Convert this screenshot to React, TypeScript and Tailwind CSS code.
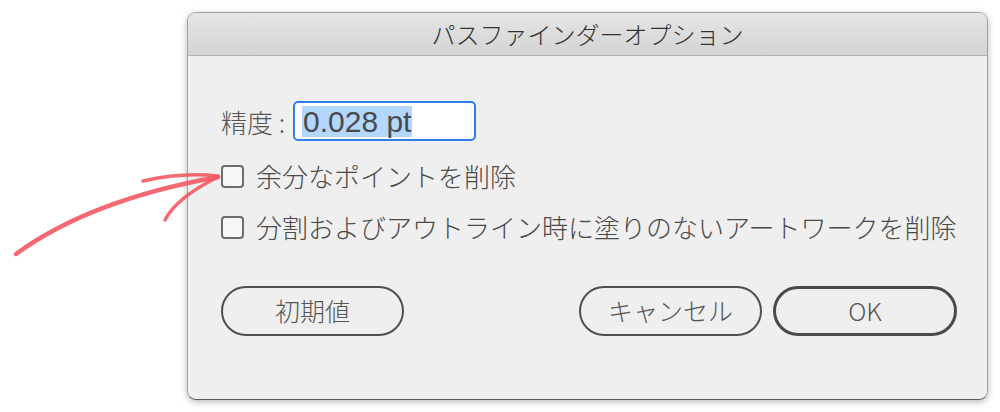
import React from 'react';

const jp = "font-['Noto_Sans_CJK_JP','Noto_Sans',sans-serif]";

function Checkbox({ label }: { label: string }) {
  return (
    <div className="flex h-[40px] items-center">
      <span className="h-[23px] w-[23px] rounded-[4px] border-2 border-[#6b6b6b] bg-[#f6f6f6]" />
      <span className="ml-[12px] text-[26px] font-light leading-[32px] text-[#4a4a4a]">{label}</span>
    </div>
  );
}

function PillButton({ label, primary }: { label: string; primary?: boolean }) {
  return (
    <button
      type="button"
      className={
        primary
          ? 'flex h-[50px] w-[184px] items-center justify-center rounded-full border-[3px] border-[#4a4a4a] text-[25px] font-light text-[#555]'
          : 'flex h-[50px] w-[183px] items-center justify-center rounded-full border-2 border-[#4f4f4f] text-[25px] font-light text-[#555]'
      }
    >
      {label}
    </button>
  );
}

// hand-drawn red arrow pointing at the first checkbox
function Arrow() {
  return (
    <svg className="pointer-events-none absolute left-0 top-0" width="1000" height="412" viewBox="0 0 1000 412">
      <g fill="none" stroke="#f4555f" strokeOpacity="0.88" strokeLinecap="round">
        <path d="M16 254 Q 90 200 218 177" strokeWidth="4.5" />
        <path d="M143 181 Q 182 172 218 176" strokeWidth="3.5" />
        <path d="M218 177 Q 176 198 165 220" strokeWidth="3.5" />
      </g>
    </svg>
  );
}

export default function App() {
  return (
    <div className={`relative h-[412px] w-[1000px] overflow-hidden bg-white ${jp}`}>
      <div className="ml-[187px] mt-[12px] flex h-[388px] w-[801px] flex-col overflow-hidden rounded-[9px] border border-[#a2a2a2] border-b-[#5a5a5a] bg-[#efefef] shadow-[0_2px_7px_rgba(0,0,0,0.28)]">
        {/* title bar */}
        <div className="flex h-[43px] items-center justify-center border-b border-[#b3b3b3] bg-gradient-to-b from-[#e5e5e5] to-[#d4d4d4] text-[24px] font-light text-[#333]">
          パスファインダーオプション
        </div>

        <div className="flex flex-1 flex-col pl-[33px] pr-[30px] pt-[45px]">
          <div className="flex h-[40px] items-center">
            <span className="w-[72px] text-[26px] font-light text-[#555]">精度 :</span>
            <div className="flex h-[40px] w-[183px] items-center rounded-[5px] border-2 border-[#2f7fe6] bg-white pl-[7px]">
              <span className="bg-[#b3d7fe] px-[1px] font-['Liberation_Sans',sans-serif] text-[30px] leading-[31px] text-[#4a4a4a]">
                0.028 pt
              </span>
            </div>
          </div>

          <div className="mt-[15px]">
            <Checkbox label="余分なポイントを削除" />
          </div>
          <div className="mt-[11px]">
            <Checkbox label="分割およびアウトライン時に塗りのないアートワークを削除" />
          </div>

          <div className="mt-[39px] flex items-center">
            <PillButton label="初期値" />
            <div className="ml-auto flex gap-[11px]">
              <PillButton label="キャンセル" />
              <PillButton label="OK" primary />
            </div>
          </div>
        </div>
      </div>
      <Arrow />
    </div>
  );
}
